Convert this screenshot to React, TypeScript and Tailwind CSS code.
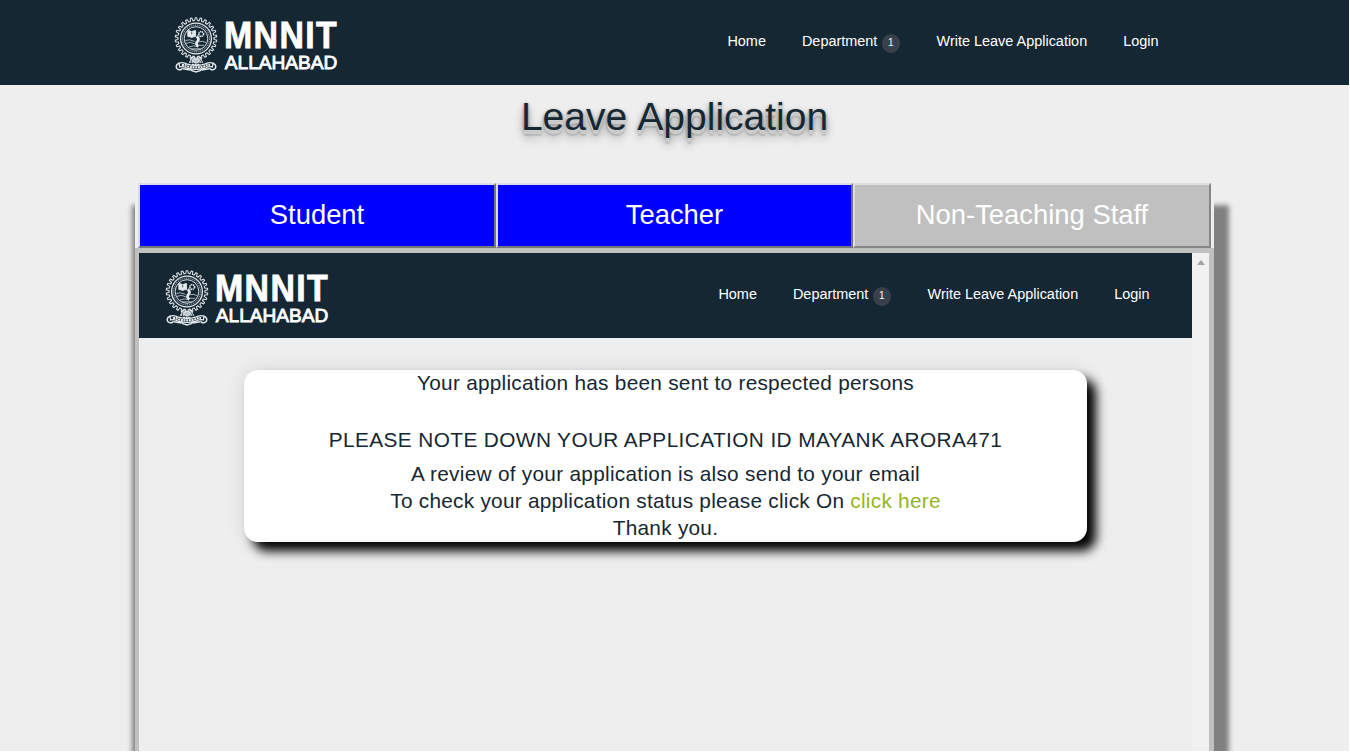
import React from "react";

const TEETH = Array.from({ length: 26 }, (_, i) => (i * 360) / 26);

function Emblem() {
  return (
    <svg viewBox="0 0 44 56" className="h-14 w-11 shrink-0" fill="none" stroke="#e3e9ec" strokeWidth="0.9">
      {TEETH.map((a) => (
        <path key={a} d="M19.7 3.6h1L21.2.7h1.6l.5 2.9h1" strokeWidth="1" transform={`rotate(${a} 22 21.5)`} />
      ))}
      <circle cx="22" cy="21.5" r="15.4" strokeWidth="1.3" />
      <circle cx="22" cy="21.5" r="13.4" stroke="#8d9aa2" strokeWidth="1.1" strokeDasharray="1.4 .8" />
      <circle cx="22" cy="21.5" r="11.8" stroke="#d3dbdf" strokeWidth="1" />
      <path d="M13.8 13.6q2 0 3.9 1.2 1.9-1.2 3.9-1.2v6q-2-.2-3.9 1-1.9-1.2-3.9-1z" fill="#e3e9ec" />
      <path d="M17.7 15v2.4" stroke="#152733" strokeWidth="0.7" />
      <circle cx="27.2" cy="17" r="2.4" strokeWidth="1.6" strokeDasharray="1.3 .5" />
      <path d="M22.6 19.5q3.2 2.2 1 4.7-2.5 2.4.6 5.5" strokeWidth="2.8" />
      <path d="M11.5 23.4q4-1.6 9 1M11.5 26.5q5-2.6 10 .6M15 30q5-2 8-.4M25 24.8q4-1.3 7 .8M25 28q3 1 5 0M17 31.8h10" stroke="#b9c4ca" />
      <path d="M17 40.5h3v2.4h-4M27 40.5h-3v2.4h4M15 45h14M18 47.4h8" strokeWidth="1.5" strokeDasharray="2 .6" />
      <path d="M18 43.5 22 41l4 2.5-4 2.8z" fill="#bdc8ce" />
      <path d="M5 46.1q4.2-1.4 8.6 1.1 8.4 2.4 16.8 0 4.4-2.5 8.6-1.1l-.6 3.8q-4-1-7.2 1.3-9.2 2.6-18.4 0-3.2-2.3-7.2-1.3z" strokeWidth="1.2" />
      <path d="M8 48.2q3-.6 5.5 1.1 8.5 2.2 17 0 2.5-1.7 5.5-1.1" strokeWidth="2.2" strokeDasharray="2 .7" />
      <path d="M5.6 46.2q-3 .4-3.4 3.2-.2 2.8 2.8 3.3 3.4.2 3.2-2M38.4 46.2q3 .4 3.4 3.2.2 2.8-2.8 3.3-3.4.2-3.2-2M9 51.7l7 1.3 1.5-1.6M35 51.7l-7 1.3-1.5-1.6M17 53.4l5 1.6 5-1.6" strokeWidth="1.4" />
    </svg>
  );
}

function Brand() {
  return (
    <div className="flex items-start">
      <Emblem />
      <svg viewBox="0 0 118 56" className="ml-1.5 h-14 w-[118px]" fill="#fff" fontFamily="'Liberation Sans', Arial, sans-serif">
        <text x="-1.1" y="31.4" fontSize="36.4" fontWeight="700" letterSpacing="1.5" stroke="#fff" strokeWidth="0.8" transform="translate(1) scale(.93 1)">MNNIT</text>
        <text x="0.8" y="51.6" fontSize="17.8" stroke="#fff" strokeWidth="0.8" textLength="112.5" lengthAdjust="spacingAndGlyphs">ALLAHABAD</text>
      </svg>
    </div>
  );
}

function SiteHeader({ inner = false }: { inner?: boolean }) {
  return (
    <header className={`flex h-[85px] shrink-0 items-start justify-between bg-[#152733] pt-[17px] ${inner ? "pl-[26px] pr-[42.5px]" : "pl-[174px] pr-[190.5px]"}`}>
      <Brand />
      <nav className="flex gap-9 pt-[14px] text-[14.45px] leading-5 text-white">
        <a>Home</a>
        <a className="flex">
          Department
          <span className="ml-[4.5px] mr-[0.7px] mt-[3px] flex h-[19px] w-[18px] items-center justify-center rounded-full bg-[#394049] pb-px text-[10px]">1</span>
        </a>
        <a>Write Leave Application</a>
        <a>Login</a>
      </nav>
    </header>
  );
}

const TAB = "flex h-[65px] items-center justify-center border-2 pb-[1px] text-[27.4px] text-white";

export default function App() {
  return (
    <div className="h-[752px] overflow-hidden bg-white font-['Liberation_Sans',Arial,sans-serif]">
      <div className="flex h-[751px] w-[1349px] flex-col overflow-hidden bg-[#eee] text-[#152733]">
        <SiteHeader />
        <h1 className="h-[98px] shrink-0 pt-[7px] text-center text-[39px] leading-[50px] [word-spacing:1.5px] [text-shadow:0_1px_0_#ccc,0_2px_0_#c9c9c9,0_3px_0_#ccc,0_4px_0_#ccc,0_6px_1px_rgba(0,0,0,0.1),0_1px_3px_rgba(0,0,0,0.3),0_3px_5px_rgba(0,0,0,0.2),0_5px_10px_rgba(0,0,0,0.25),0_10px_10px_rgba(0,0,0,0.15)]">
          Leave Application
        </h1>
        <main className="mx-[135px] flex h-[620px] w-[1079px] shrink-0 flex-col bg-[#eee] shadow-[6px_31px_5px_9px_#808080]">
          <div className="ml-[3px] grid w-[1073px] grid-cols-[358px_357px_358px]">
            <button className={`${TAB} border-t-[#dcdce8] border-l-[#dcdce8] border-r-[#777] border-b-[#777] bg-[#00f]`}>Student</button>
            <button className={`${TAB} border-t-[#dcdce8] border-l-[#dcdce8] border-r-[#777] border-b-[#777] bg-[#00f]`}>Teacher</button>
            <button className={`${TAB} border-t-[#dedede] border-l-[#dedede] border-r-[#858585] border-b-[#858585] bg-[#c0c0c0]`}>Non-Teaching Staff</button>
          </div>
          <section className="flex grow border-l-4 border-r-[5px] border-t-[5px] border-[#c0c0c0]">
            <div className="flex w-[1053px] flex-col bg-[#eee]">
              <SiteHeader inner />
              <div className="mx-auto mt-8 h-[172px] w-[843px] rounded-[14px] bg-white text-center text-[20.8px] leading-[27px] tracking-[0.26px] shadow-[9px_9px_11px_#000,0_0_20px_rgba(0,0,0,0.1)]">
                <p className="-mt-px">Your application has been sent to respected persons</p>
                <p className="mt-[30px] tracking-[0.4px]">PLEASE NOTE DOWN YOUR APPLICATION ID MAYANK ARORA471</p>
                <p className="mt-[7px] tracking-[0.28px]">A review of your application is also send to your email</p>
                <p>
                  To check your application status please click On <a className="text-[#97b41d]">click here</a>
                </p>
                <p>Thank you.</p>
              </div>
            </div>
            <div className="flex w-[17px] justify-center bg-[#f1f1f1] pt-[7px]">
              <svg viewBox="0 0 8 5" className="h-[5px] w-2">
                <path d="M0 5 4 0l4 5z" fill="#a3a3a3" />
              </svg>
            </div>
          </section>
        </main>
      </div>
    </div>
  );
}
